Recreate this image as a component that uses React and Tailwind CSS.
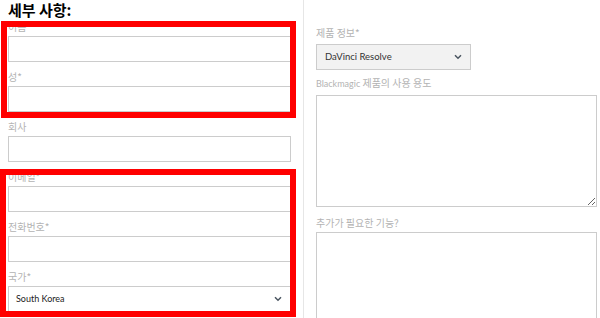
import React from 'react';

const labelCls = "block text-[10px] leading-[14px] text-[#b3b3b3] font-['Noto_Sans_CJK_KR',sans-serif]";
const inputCls = "block w-full h-[26px] border border-[#cccccc] bg-white";

const Chevron = ({ className }) => (
    <svg className={className} width="8" height="6" viewBox="0 0 8 6" fill="none">
        <path d="M1 1.2 L4 4.2 L7 1.2" stroke="#4a5560" strokeWidth="1.5" />
    </svg>
);

const Field = ({ label, first }) => (
    <div>
        <label className={`${labelCls} ${first ? 'mb-[2px]' : 'pt-[8px] mb-[2px]'}`}>{label}</label>
        <div className={inputCls}></div>
    </div>
);

const App = () => {
    return (
        <div className="relative w-[600px] h-[318px] overflow-hidden bg-white flex">
            {/* Left column: details */}
            <div className="w-[303px] shrink-0 pl-[8px] pr-[12px]">
                <h2 className="text-[15px] leading-[20px] font-bold text-black font-['Noto_Sans_CJK_KR',sans-serif]">세부 사항:</h2>
                <Field label="이름" first />
                <Field label="성*" />
                <Field label="회사" />
                <Field label="이메일*" />
                <Field label="전화번호*" />
                <div>
                    <label className={`${labelCls} pt-[8px] mb-[2px]`}>국가*</label>
                    <div className="h-[26px] border border-[#cccccc] bg-white flex items-center justify-between pl-[7px] pr-[8px]">
                        <span className="text-[9px] text-[#222] font-['Lato',sans-serif]">South Korea</span>
                        <Chevron />
                    </div>
                </div>
            </div>

            {/* Right column: product */}
            <div className="flex-1 border-l border-[#e6e6e6] pl-[12px] pr-[3px] pt-[26px]">
                <label className={`${labelCls} mb-[4px]`}>제품 정보*</label>
                <div className="w-[155px] h-[26px] border border-[#cccccc] bg-[#f2f2f2] flex items-center justify-between pl-[8px] pr-[8px]">
                    <span className="text-[9.5px] text-[#333] font-['Lato',sans-serif]">DaVinci Resolve</span>
                    <Chevron />
                </div>
                <label className={`${labelCls} pt-[6px] mb-[4px]`}>
                    <span className="text-[9px] font-['Lato',sans-serif]">Blackmagic</span> 제품의 사용 용도
                </label>
                <textarea className="block w-full h-[112px] border border-[#cccccc] bg-white outline-none" />
                <label className={`${labelCls} pt-[9px] mb-[2px]`}>추가가 필요한 기능?</label>
                <textarea className="block w-full h-[110px] border border-[#cccccc] bg-white outline-none resize-none" />
            </div>

            {/* Red annotation boxes */}
            <div className="absolute left-[1px] top-[21px] w-[295px] h-[97px] border-[6px] border-[#ff0000] pointer-events-none"></div>
            <div className="absolute left-0 top-[169px] w-[296px] h-[148px] border-[6px] border-[#ff0000] pointer-events-none"></div>
        </div>
    );
};

export default App;
